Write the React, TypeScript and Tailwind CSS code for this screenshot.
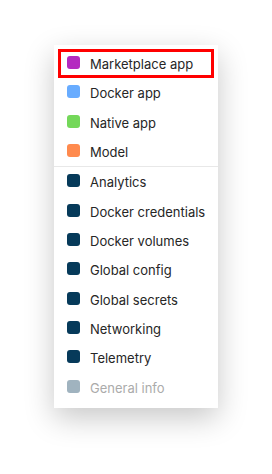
import { FC } from "react";

type Item = {
  label: string;
  color: string;
  disabled?: boolean;
  selected?: boolean;
};

const groupA: Item[] = [
  { label: "Marketplace app", color: "bg-[#b42ac0]", selected: true },
  { label: "Docker app", color: "bg-[#68acff]" },
  { label: "Native app", color: "bg-[#74d85a]" },
  { label: "Model", color: "bg-[#ff8a4e]" },
];

const groupB: Item[] = [
  { label: "Analytics", color: "bg-[#063a5a]" },
  { label: "Docker credentials", color: "bg-[#063a5a]" },
  { label: "Docker volumes", color: "bg-[#063a5a]" },
  { label: "Global config", color: "bg-[#063a5a]" },
  { label: "Global secrets", color: "bg-[#063a5a]" },
  { label: "Networking", color: "bg-[#063a5a]" },
  { label: "Telemetry", color: "bg-[#063a5a]" },
  { label: "General info", color: "bg-[#a0b3bf]", disabled: true },
];

const Row: FC<{ item: Item }> = ({ item }) => (
  <div
    className={`flex items-center h-[29.33px] mx-[4px] pl-[9px] gap-[10px] ${
      item.selected ? "outline-[3px] outline-[#ff0000] -outline-offset-[3px]" : ""
    }`}
  >
    <span className={`w-[13px] h-[13px] rounded-[3px] shrink-0 -translate-y-[1px] ${item.color}`} />
    <span className={`text-[13px] leading-none translate-y-[1px] ${item.disabled ? "text-[#ababab]" : "text-[#262626]"}`}>
      {item.label}
    </span>
  </div>
);

export default function App() {
  return (
    <div className="w-[272px] h-[474px] bg-white font-['Inter',sans-serif] pt-[45px] pl-[54px]">
      <div className="w-[164px] bg-white pt-[4px] pb-[6px] shadow-[0_10px_28px_rgba(0,0,0,0.22)]">
        {groupA.map(i => <Row key={i.label} item={i} />)}
        <div className="h-px bg-[#e8e8e8]" />
        {groupB.map(i => <Row key={i.label} item={i} />)}
      </div>
    </div>
  );
}
